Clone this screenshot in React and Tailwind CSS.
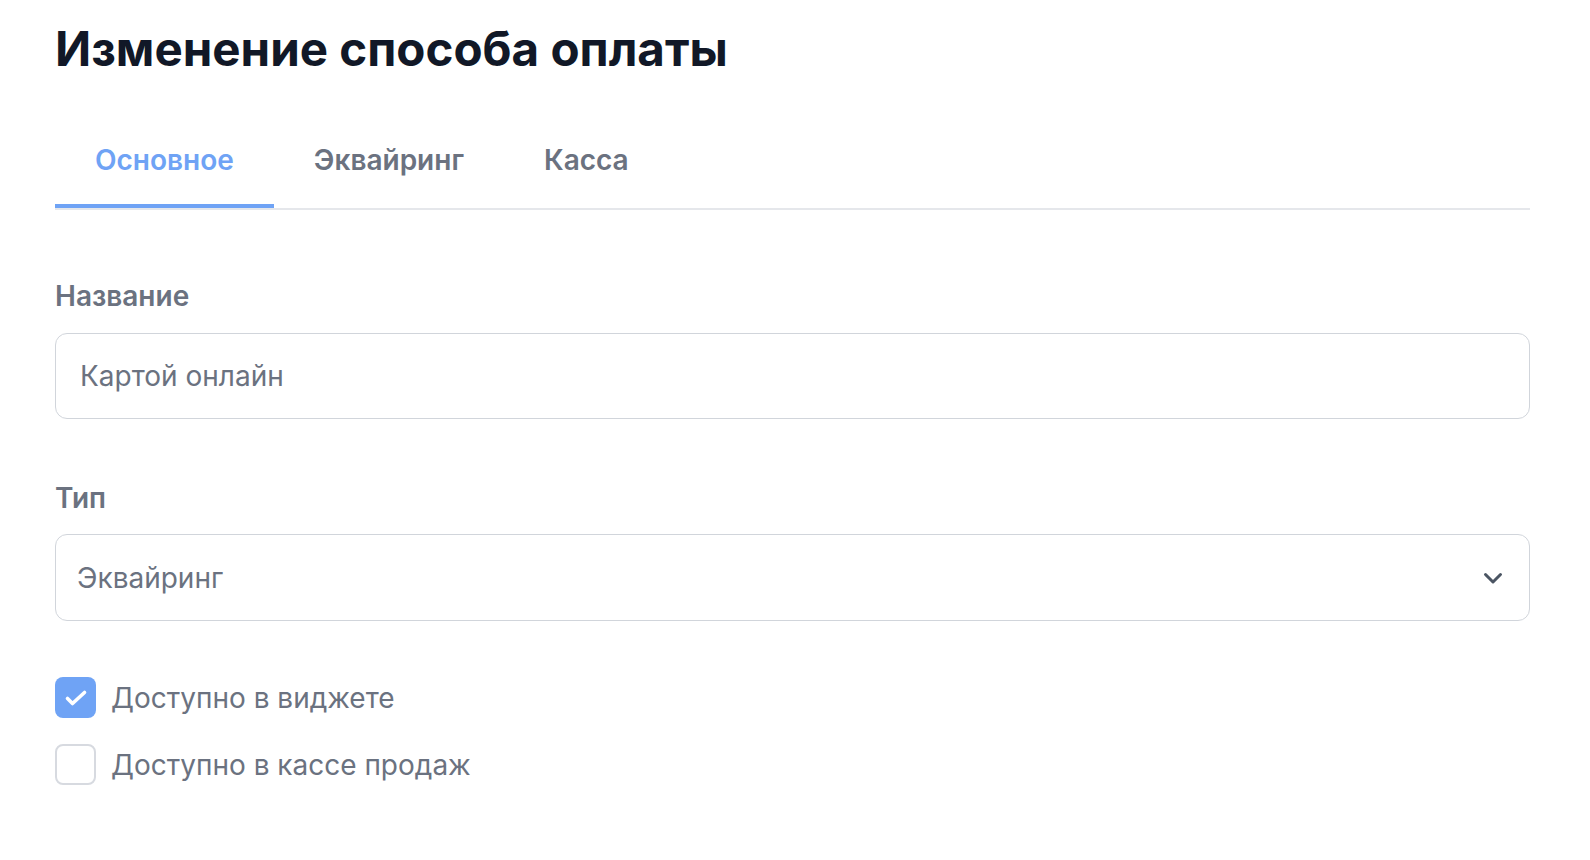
import React, { useState } from 'react';

const tabs = ['Основное', 'Эквайринг', 'Касса'];

function Checkbox({ checked, onChange, label }) {
  return (
    <label className="flex items-center gap-[15px] cursor-pointer select-none">
      <span
        onClick={onChange}
        className={
          checked
            ? 'w-[41px] h-[41px] rounded-lg bg-[#6fa3f5] flex items-center justify-center'
            : 'w-[41px] h-[41px] rounded-lg border-2 border-[#d7dae0] bg-white'
        }
      >
        {checked && (
          <svg width="24" height="18" viewBox="0 0 24 18" fill="none">
            <path d="M3.5 9.5l5 5L20.5 3.5" stroke="white" strokeWidth="3.6" strokeLinecap="round" strokeLinejoin="round" />
          </svg>
        )}
      </span>
      <span className="text-[28px] leading-8 text-[#6b7280]">{label}</span>
    </label>
  );
}

export default function App() {
  const [active, setActive] = useState(0);
  const [widget, setWidget] = useState(true);
  const [kassa, setKassa] = useState(false);

  return (
    <div className="min-h-screen bg-white pl-[55px] pt-[21px]" style={{ fontFamily: 'Inter, "Noto Sans", sans-serif' }}>
      <div className="w-[1475px]">
        {/* Title */}
        <h1 className="text-[47.5px] leading-[56px] font-bold text-[#111827]">Изменение способа оплаты</h1>

        {/* Tabs */}
        <div className="mt-[37px] flex border-b-2 border-[#e5e7eb]">
          {tabs.map((t, i) => (
            <button
              key={t}
              onClick={() => setActive(i)}
              className={
                i === active
                  ? 'px-10 pt-[30px] pb-[28px] border-b-4 border-[#6fa3f5] text-[28px] leading-8 font-semibold text-[#6fa3f5]'
                  : 'px-10 pt-[30px] pb-[32px] text-[28px] leading-8 font-semibold text-[#6b7280]'
              }
            >
              {t}
            </button>
          ))}
        </div>

        {/* Name */}
        <div className="mt-[70px] text-[28px] leading-8 font-semibold text-[#6b7280]">Название</div>
        <div className="mt-[21px] h-[86px] rounded-xl border border-[#d1d5db] flex items-center px-6">
          <span className="text-[28px] text-[#6b7280]">Картой онлайн</span>
        </div>

        {/* Type */}
        <div className="mt-[63px] text-[28px] leading-8 font-semibold text-[#6b7280]">Тип</div>
        <div className="mt-5 h-[87px] rounded-xl border border-[#d1d5db] flex items-center justify-between pl-[21px] pr-6">
          <span className="text-[28px] text-[#6b7280]">Эквайринг</span>
          <svg width="24" height="24" viewBox="0 0 24 24" fill="none">
            <path d="M4.5 8.5l7.5 7.5 7.5-7.5" stroke="#4b5563" strokeWidth="3" strokeLinecap="round" strokeLinejoin="round" />
          </svg>
        </div>

        {/* Checkboxes */}
        <div className="mt-14 flex flex-col gap-[26px]">
          <Checkbox checked={widget} onChange={() => setWidget(!widget)} label="Доступно в виджете" />
          <Checkbox checked={kassa} onChange={() => setKassa(!kassa)} label="Доступно в кассе продаж" />
        </div>
      </div>
    </div>
  );
}
